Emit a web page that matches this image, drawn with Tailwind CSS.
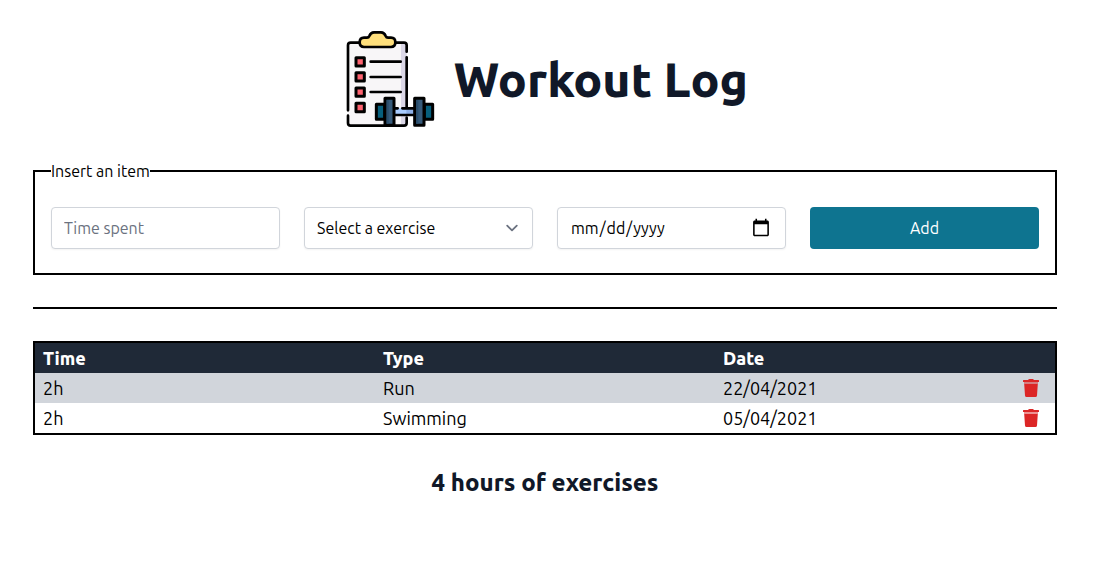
<!DOCTYPE html>
<html lang="en">
<head>
<meta charset="utf-8">
<meta name="viewport" content="width=device-width, initial-scale=1">
<title>Workout Log</title>
<script src="https://cdn.jsdelivr.net/npm/@tailwindcss/browser@4"></script>
</head>
<body class="bg-white pr-[22px] font-['Ubuntu','Noto_Sans',sans-serif] text-base font-[430] text-black">
<main class="mx-auto flex max-w-5xl flex-col gap-8 pt-[31px] pb-8">
  <header class="flex items-center justify-center gap-4">
    <svg class="size-24 shrink-0" viewBox="21 33 288 288" aria-hidden="true" stroke-linecap="round" stroke-linejoin="round">
      <path d="M39 76q0-8 8-8H207q8 0 8 8V309q0 8-8 8H47q-8 0-8-8Z" fill="#f8f6f8"/>
      <path d="M198 68h9q8 0 8 8V309q0 8-8 8h-9Z" fill="#dcd8e8"/>
      <g fill="none" stroke="#000" stroke-width="8">
        <path d="M75 68H47q-8 0-8 8V271M39 287v22q0 8 8 8H207q8 0 8-8v-16M180 68h27q8 0 8 8V95M215 112V263"/>
        <path d="M107 125h90M107 171h90M107 216h90"/>
      </g>
      <path d="M87 53h9q5 0 7-5 4-11 14-11h21q10 0 14 11 2 5 7 5h9q13 0 13 14t-13 14H87q-13 0-13-14t13-14Z" fill="#ffdf7c" stroke="#000" stroke-width="8"/>
      <g fill="#ff6270" stroke="#000" stroke-width="9">
        <path d="M63 113h25v25H63ZM63 158h25v25H63ZM63 204h25v25H63ZM63 250h25v25H63Z"/>
      </g>
      <path d="M178 265h60v18h-60Z" fill="#a9ccff"/>
      <path d="M214 268h22v15h-22Z" fill="#8eb0e8"/>
      <path d="M181 265h7M202 265h35M181 285h56" fill="none" stroke="#000" stroke-width="8"/>
      <path d="M124 253h25v45h-25ZM268 253h25v45h-25Z" fill="#075f7d" stroke="#000" stroke-width="9"/>
      <path d="M150 235h27v81h-27ZM239 235h28v81h-28Z" fill="#365a7a" stroke="#000" stroke-width="9"/>
      <path d="M155 240h6v71h-6ZM244 240h6v71h-6Z" fill="#294d6c"/>
    </svg>
    <h1 class="text-5xl font-extrabold text-gray-900">Workout Log</h1>
  </header>

  <form>
    <fieldset class="border-2 border-black px-4 py-6">
      <legend>Insert an item</legend>
      <div class="grid grid-cols-4 gap-6">
        <input type="text" aria-label="Time spent" placeholder="Time spent" class="h-[42px] w-full min-w-0 rounded border border-[#d1d5db] bg-white px-3 shadow-xs placeholder:text-[#6b7280]">
        <div class="relative">
          <select aria-label="Exercise" class="h-[42px] w-full appearance-none rounded border border-[#d1d5db] bg-white pr-10 pl-3 shadow-xs">
            <option>Select a exercise</option>
            <option>Run</option>
            <option>Swimming</option>
          </select>
          <svg class="pointer-events-none absolute top-1/2 right-[9px] size-6 -translate-y-1/2" viewBox="0 0 20 20" fill="none" stroke="#6b7280" stroke-width="1.5" stroke-linecap="round" stroke-linejoin="round" aria-hidden="true"><path d="M6 8l4 4 4-4"/></svg>
        </div>
        <input type="date" aria-label="Date" class="h-[42px] w-full min-w-0 rounded border border-[#d1d5db] bg-white px-3 shadow-xs [&::-webkit-calendar-picker-indicator]:size-5">
        <button type="button" class="h-[42px] rounded bg-[#0e7490] text-white">Add</button>
      </div>
    </fieldset>
  </form>

  <hr class="border-t-2 border-black">

  <div class="border-2 border-black">
    <table class="w-full table-fixed text-left text-lg">
      <colgroup><col class="w-1/3"><col class="w-1/3"><col><col class="w-12"></colgroup>
      <thead class="bg-[#1f2937] text-white">
        <tr>
          <th class="px-2 py-px font-extrabold">Time</th>
          <th class="px-2 py-px font-extrabold">Type</th>
          <th class="px-2 py-px font-extrabold" colspan="2">Date</th>
        </tr>
      </thead>
      <tbody>
        <tr class="bg-[#d1d5db]">
          <td class="px-2 py-px">2h</td>
          <td class="px-2 py-px">Run</td>
          <td class="px-2 py-px">22/04/2021</td>
          <td class="py-px pr-4">
            <button type="button" aria-label="Delete Run" class="ml-auto block text-[#dc2626]">
              <svg class="h-[18px] w-4" viewBox="0 0 16 18" fill="currentColor" aria-hidden="true"><path d="M0 1.4Q0 1 .4 1H5l.7-.7Q6 0 6.400 0h3.200q.4 0 .7.300L11 1h4.600q.4 0 .4.400V3H0Z"/><path d="M1 3h14v2H1Z" opacity=".5"/><path d="M1.200 5h13.600l-.8 11.500Q13.900 18 12.400 18H3.600Q2.100 18 2 16.500Z"/></svg>
            </button>
          </td>
        </tr>
        <tr>
          <td class="px-2 py-px">2h</td>
          <td class="px-2 py-px">Swimming</td>
          <td class="px-2 py-px">05/04/2021</td>
          <td class="py-px pr-4">
            <button type="button" aria-label="Delete Swimming" class="ml-auto block text-[#dc2626]">
              <svg class="h-[18px] w-4" viewBox="0 0 16 18" fill="currentColor" aria-hidden="true"><path d="M0 1.4Q0 1 .4 1H5l.7-.7Q6 0 6.400 0h3.200q.4 0 .7.300L11 1h4.600q.4 0 .4.400V3H0Z"/><path d="M1 3h14v2H1Z" opacity=".5"/><path d="M1.200 5h13.600l-.8 11.500Q13.900 18 12.400 18H3.600Q2.100 18 2 16.500Z"/></svg>
            </button>
          </td>
        </tr>
      </tbody>
    </table>
  </div>

  <h2 class="text-center text-2xl font-extrabold text-gray-900">4 hours of exercises</h2>
</main>
</body>
</html>
